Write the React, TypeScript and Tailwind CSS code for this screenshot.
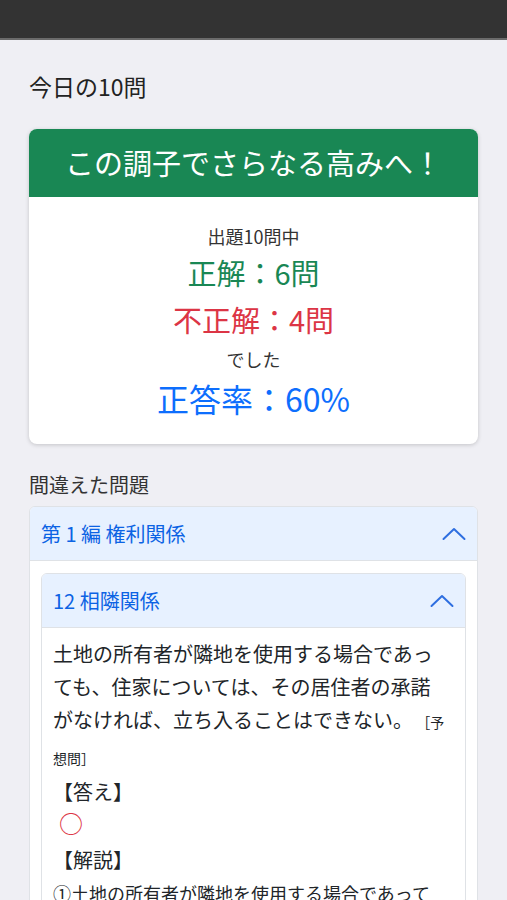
import React from "react";

const font = "font-['Noto_Sans_CJK_JP','Noto_Sans',sans-serif]";

const Chevron = () => (
  <svg width="24" height="14" viewBox="0 0 24 14" fill="none" className="shrink-0">
    <polyline points="1.5,12 12,2 22.5,12" stroke="#2f6fe0" strokeWidth="2" strokeLinecap="round" strokeLinejoin="round" />
  </svg>
);

const App = () => {
  return (
    <div className={`min-h-screen bg-[#efeff4] text-[#212529] ${font}`}>
      {/* status bar */}
      <div className="h-[40px] bg-[#333333] border-b-2 border-[#6b6b6b]" />

      <div className="px-[29px] pb-10">
        <h1 className="mt-[30px] text-[23px] leading-[32px] text-[#222]">今日の10問</h1>

        {/* result card */}
        <div className="mt-[27px] bg-white rounded-lg overflow-hidden shadow-[0_1px_4px_rgba(0,0,0,0.18)]">
          <div className="h-[68px] bg-[#198754] flex items-center justify-center text-white text-[29px]">
            この調子でさらなる高みへ！
          </div>
          <div className="pt-[25px] pb-[24px] flex flex-col items-center">
            <p className="text-[18px] leading-[28px] text-[#333]">出題10問中</p>
            <p className="mt-[2px] text-[29px] leading-[40px] text-[#198754]">正解：6問</p>
            <p className="mt-[7px] text-[29px] leading-[40px] text-[#dc3545]">不正解：4問</p>
            <p className="mt-[6px] text-[18px] leading-[28px] text-[#333]">でした</p>
            <p className="mt-[3px] text-[32px] leading-[44px] text-[#0d6efd]">正答率：60%</p>
          </div>
        </div>

        <h2 className="mt-[27px] text-[20px] leading-[28px] text-[#333]">間違えた問題</h2>

        {/* accordion */}
        <div className="mt-[7px] bg-white border border-[#dfe2e6] rounded-md overflow-hidden">
          <div className="h-[54px] px-[11px] flex items-center justify-between bg-[#e7f1ff] border-b border-[#dfe2e6]">
            <span className="text-[20px] text-[#0c63e4]">第 1 編 権利関係</span>
            <Chevron />
          </div>
          <div className="px-[11px] py-3">
            <div className="border border-[#dfe2e6] rounded-md overflow-hidden">
              <div className="h-[54px] px-[11px] flex items-center justify-between bg-[#e7f1ff] border-b border-[#dfe2e6]">
                <span className="text-[20px] text-[#0c63e4]">12 相隣関係</span>
                <Chevron />
              </div>
              <div className="pl-[11px] pr-[17px] pt-[9px] pb-4">
                <p className="text-[20px] leading-[33px]">
                  土地の所有者が隣地を使用する場合であっても、住家については、その居住者の承諾がなければ、立ち入ることはできない。
                  <span className="text-[14px]"> ［予想問］</span>
                </p>
                <p className="text-[20px] leading-[33px]">【答え】</p>
                <p className="pl-[6px] text-[24px] leading-[30px] text-[#dc3545]">○</p>
                <p className="mt-[5px] text-[20px] leading-[33px]">【解説】</p>
                <p className="mt-[1px] text-[18px] leading-[33px]">
                  ①土地の所有者が隣地を使用する場合であっても、住家については、その居住者の承諾がなければ、立ち入ることはできません。
                </p>
              </div>
            </div>
          </div>
        </div>
      </div>
    </div>
  );
};

export default App;
